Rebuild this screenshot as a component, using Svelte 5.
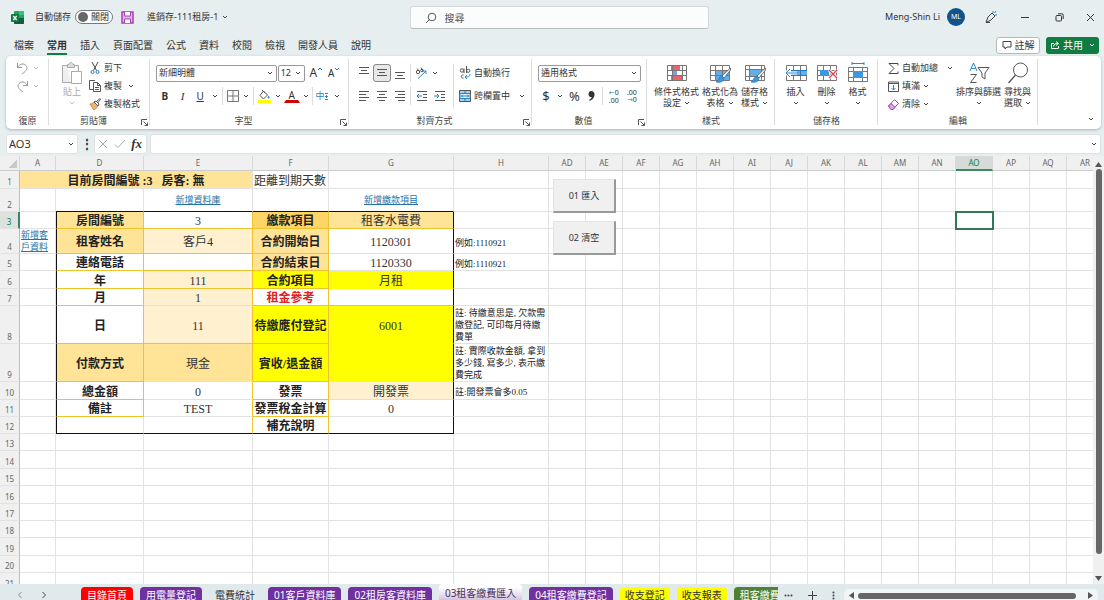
<script>
	let autoSave = false;
	let search = '';
	let cellName = 'AO3';
	let formula = '';

	const menus = ['檔案', '常用', '插入', '頁面配置', '公式', '資料', '校閱', '檢視', '開發人員', '說明'];

	const cols = [
		['A', 36],
		['D', 88],
		['E', 109],
		['F', 76],
		['G', 125],
		['H', 95],
		...['AD', 'AE', 'AF', 'AG', 'AH', 'AI', 'AJ', 'AK', 'AL', 'AM', 'AN', 'AO', 'AP', 'AQ', 'AR'].map((c) => [c, 37])
	];
	const tableWidth = cols.reduce((sum, c) => sum + c[1], 20);

	const rowHeights = [18, 23, 17, 25, 17, 18, 17, 38, 38, 18, 17, 17, 17, 18, 17, 18, 17, 17, 18, 17, 18];

	// text + classes per cell, everything else stays an empty grid cell
	const cells = {
		A1: { t: '目前房間編號 :3   房客: 無', c: 'bold sand', span: 3 },
		F1: { t: '距離到期天數', c: 'left' },
		D2: { c: 'edge-b' },
		E2: { t: '新增資料庫', c: 'link edge-b' },
		F2: { c: 'edge-b' },
		G2: { t: '新增繳款項目', c: 'link edge-b' },
		D3: { t: '房間編號', c: 'bold sand gb gr edge-l' },
		E3: { t: '3', c: 'gb gr' },
		F3: { t: '繳款項目', c: 'bold amber gb gr' },
		G3: { t: '租客水電費', c: 'sand gb edge-r' },
		A4: { t: '新增客\n戶資料', c: 'link left' },
		D4: { t: '租客姓名', c: 'bold sand gb gr edge-l' },
		E4: { t: '客戶4', c: 'cream gb gr' },
		F4: { t: '合約開始日', c: 'bold sand gb gr' },
		G4: { t: '1120301', c: 'edge-r' },
		H4: { t: '例如:1110921', c: 'note' },
		D5: { t: '連絡電話', c: 'bold gb gr edge-l' },
		E5: { c: 'gb gr' },
		F5: { t: '合約結束日', c: 'bold sand gb gr' },
		G5: { t: '1120330', c: 'edge-r' },
		H5: { t: '例如:1110921', c: 'note' },
		D6: { t: '年', c: 'bold gb gr edge-l' },
		E6: { t: '111', c: 'cream gb gr' },
		F6: { t: '合約項目', c: 'bold yellow gb gr' },
		G6: { t: '月租', c: 'yellow edge-r' },
		D7: { t: '月', c: 'bold gb gr edge-l' },
		E7: { t: '1', c: 'cream gr' },
		F7: { t: '租金參考', c: 'bold red gb gr' },
		G7: { c: 'gb edge-r' },
		D8: { t: '日', c: 'bold gb gr edge-l' },
		E8: { t: '11', c: 'cream gb gr' },
		F8: { t: '待繳應付登記', c: 'bold yellow gb gr' },
		G8: { t: '6001', c: 'yellow edge-r' },
		H8: { t: '註: 待繳意思是, 欠款需\n繳登記, 可印每月待繳\n費單', c: 'note long' },
		D9: { t: '付款方式', c: 'bold sand gb gr edge-l' },
		E9: { t: '現金', c: 'sand gr' },
		F9: { t: '實收/退金額', c: 'bold yellow gb gr' },
		G9: { c: 'yellow edge-r' },
		H9: { t: '註: 實際收款金額, 拿到\n多少錢, 寫多少, 表示繳\n費完成', c: 'note long' },
		D10: { t: '總金額', c: 'bold gb gr edge-l' },
		E10: { t: '0', c: 'gr' },
		F10: { t: '發票', c: 'bold gb gr' },
		G10: { t: '開發票', c: 'cream edge-r' },
		H10: { t: '註:開發票會多0.05', c: 'note' },
		D11: { t: '備註', c: 'bold gb gr edge-l' },
		E11: { t: 'TEST', c: 'gr' },
		F11: { t: '發票稅金計算', c: 'bold gb gr' },
		G11: { t: '0', c: 'edge-r' },
		D12: { c: 'edge-l edge-b' },
		E12: { c: 'gr edge-b' },
		F12: { t: '補充說明', c: 'bold gr edge-b' },
		G12: { c: 'edge-r edge-b' },
		AO3: { c: 'selected' }
	};

	const rows = rowHeights.map((h, i) => {
		const n = i + 1;
		const list = [];
		for (let c = 0; c < cols.length; c++) {
			const cell = cells[cols[c][0] + n] ?? {};
			list.push({ id: cols[c][0] + n, ...cell });
			if (cell.span) c += cell.span - 1;
		}
		return { n, h, list };
	});

	const sheets = [
		['目錄首頁', 'red'],
		['用電量登記', 'purple'],
		['電費統計', ''],
		['01客戶資料庫', 'purple'],
		['02租房客資料庫', 'purple'],
		['03租客繳費匯入', 'current'],
		['04租客繳費登記', 'purple'],
		['收支登記', 'yellow'],
		['收支報表', 'yellow'],
		['租客繳費', 'green']
	];
</script>

{#snippet chev()}
	<svg class="chev" viewBox="0 0 6 4" width="6" height="4"><path d="M1 1 3 3 5 1" /></svg>
{/snippet}

{#snippet launcher()}
	<button class="launcher" aria-label="更多選項">
		<svg width="7" height="7" viewBox="0 0 7 7"><path d="M.5 6V.5H6M2.5 2.5l4 4M6.500 3.500v3h-3" /></svg>
	</button>
{/snippet}

{#snippet lines(a, b)}
	<svg width="12" height="12" viewBox="0 0 12 12">
		{#each a as l}
			<path d="M{l[0]} {l[2]}.5H{l[1]}" stroke="#555" />
		{/each}
		{#if b}
			<path d={b} stroke="#2b88c8" fill="none" />
		{/if}
	</svg>
{/snippet}

{#snippet sheetIcon(kind)}
	<svg width="22" height="22" viewBox="0 0 22 22" fill="none">
		{#if kind === 'cond'}
			<path d="M1 3h20v16H1z" fill="#fff" />
			<path d="M5 3h9v5H5zM5 13h11v6H5z" fill="#f0606b" />
			<path d="M6 8h5v5H6z" fill="#7d9ee0" />
			<path d="M1.500 3.500h19v15h-19zM1.500 8.500h19M1.500 13.500h19M6.500 3v16M16.500 3v16" stroke="#777" />
		{:else if kind === 'table' || kind === 'style'}
			<path d={kind === 'table' ? 'M7 8h13v11H7z' : 'M5 7h12v8H5z'} fill="#62aee8" />
			{#if kind === 'table'}
				<path d="M1.500 3.500h19v15h-19zM1.500 8.500h19M1.500 13.500h19M6.500 3v16M13.500 3v16" stroke="#777" />
			{:else}
				<path d="M1.500 3.500h19v15h-19zM1.500 7.500h19M1.500 14.500h19M5.500 3v16M17.500 3v16" stroke="#777" />
			{/if}
			<path d="M21.500 6 13 14l2 2 6.500-8z" fill="#fff" stroke="#555" stroke-width=".8" />
			<path d="M13 14c-3 0-3 4-6 6 4 1 8 0 8-4z" fill="#3d97dc" stroke="#1f6fb0" stroke-width=".6" />
		{:else if kind === 'insert'}
			<path d="M1.500 3.500h20v15h-20zM8.500 3v16M15.500 3v16" stroke="#777" />
			<path d="M6 8h16v6H6z" fill="#62aee8" />
			<path d="M15.500 8v6M22 8.500H6M22 13.500H6" stroke="#2b78b8" />
			<path d="M12 11H1M5 7l-4 4 4 4" stroke="#fff" stroke-width="3" />
			<path d="M13 11H1M5 7l-4 4 4 4" stroke="#2b88c8" />
		{:else if kind === 'delete'}
			<path d="M1.500 3.500h19v15h-19zM1.500 8.500h19M1.500 13.500h19M7.500 3v16M14.500 3v16" stroke="#777" />
			<path d="M4 8h9v6H4z" fill="#3d97dc" />
			<path d="m13 8 8 8M21 8l-8 8" stroke="#fff" stroke-width="3" />
			<path d="m13 8 8 8M21 8l-8 8" stroke="#e04040" stroke-width="1.200" />
		{:else if kind === 'format'}
			<path d="M5 1.500h12M5 0v3M17 0v3" stroke="#2b88c8" />
			<path d="M1.500 5.500h19v14h-19zM1.500 9.500h19M1.500 15.500h19M6.500 5v15M15.500 5v15" stroke="#777" />
			<path d="M6 9h10v7H6z" fill="#3d97dc" />
		{/if}
	</svg>
{/snippet}

{#snippet big(kind, a, b)}
	<button class="big">
		{@render sheetIcon(kind)}
		<span>{a}</span>
		<span>{b}{@render chev()}</span>
	</button>
{/snippet}

<div class="app">
	<header class="title-bar">
		<svg width="13" height="13" viewBox="0 0 13 13">
			<rect x="3" width="10" height="13" rx="1" fill="#21a366" />
			<path d="M8 0h4a1 1 0 0 1 1 1v3H8z" fill="#33c481" />
			<path d="M3 7h10v5a1 1 0 0 1-1 1H4a1 1 0 0 1-1-1z" fill="#185c37" />
			<rect y="3" width="8" height="8" rx="1" fill="#107c41" />
			<path d="m2.300 5 3.400 4M5.700 5 2.300 9" stroke="#fff" stroke-width="1.200" />
		</svg>
		<label class="autosave">
			自動儲存
			<input type="checkbox" role="switch" bind:checked={autoSave} />
			<span class="switch"><i></i>關閉</span>
		</label>
		<button class="save" aria-label="儲存">
			<svg width="13" height="13" viewBox="0 0 13 13" fill="none" stroke="#a73fb5">
				<path d="M1 1h11v11H1z" fill="#e5b5ea" stroke-width="1.500" />
				<path d="M3.500 1v4h6V1M3.500 12V8h6v4" fill="#fff" />
			</svg>
		</button>
		<button class="file">進銷存-111租房-1 {@render chev()}</button>
		<label class="search">
			<svg width="12" height="12" viewBox="0 0 12 12" fill="none" stroke="#555"><circle cx="7" cy="5" r="3.800" /><path d="M4.300 7.700 1 11" /></svg>
			<input type="search" placeholder="搜尋" aria-label="搜尋" bind:value={search} />
		</label>
		<div class="account">
			<span>Meng-Shin Li</span>
			<span class="avatar">ML</span>
		</div>
		<div class="window">
			<button aria-label="繪圖">
				<svg width="14" height="14" viewBox="0 0 14 14" fill="none" stroke="#444"><path d="M2 12.500 4 7l4-4 3 3-4 4zM2 12.500h4" /><path d="M9 1v2M13 5h-2M12 1l-1.500 2" stroke="#2b88c8" /></svg>
			</button>
			<button aria-label="最小化"><svg width="8" height="8" viewBox="0 0 8 8"><path d="M0 4.500h8" stroke="#333" /></svg></button>
			<button aria-label="還原">
				<svg width="9" height="9" viewBox="0 0 9 9" fill="none" stroke="#333"><rect x="1" y="2.500" width="5.500" height="5.500" rx="1" /><path d="M3 .8h3.500A1.500 1.500 0 0 1 8.200 2.500V6" /></svg>
			</button>
			<button aria-label="關閉"><svg width="9" height="9" viewBox="0 0 9 9"><path d="m1 1 7 7M8 1 1 8" stroke="#333" /></svg></button>
		</div>
	</header>

	<nav class="menus">
		{#each menus as m}
			<a href="#{m}" class:active={m === '常用'}>{m}</a>
		{/each}
		<span class="grow"></span>
		<button class="comment">
			<svg width="10" height="10" viewBox="0 0 10 10" fill="none" stroke="#444"><path d="M1 1.500h8v5.500H5L3 9V7H1z" /></svg>
			註解
		</button>
		<button class="share">
			<svg width="10" height="10" viewBox="0 0 10 10" fill="none" stroke="#fff"><path d="M4 3.500H1.500v5h7V6M3.500 6.500C4 4 5.500 3.500 8 3.500M6 1.500l2.500 2L6 5.500" /></svg>
			共用
			{@render chev()}
		</button>
	</nav>

	<section class="ribbon">
		<div class="group undo">
			<div class="body">
				<div class="stack faded">
					<button class="row" aria-label="復原"><svg width="13" height="13" viewBox="0 0 13 13" fill="none" stroke="#999"><path d="M1.500 1v4.500H6M1.500 5.500C4 1.500 8 1 10 3.500s1 5-4 8.500" /></svg>{@render chev()}</button>
					<button class="row" aria-label="取消復原"><svg width="13" height="13" viewBox="0 0 13 13" fill="none" stroke="#999"><path d="M11.500 1v4.500H7M11.500 5.500C9 1.500 5 1 3 3.500s-1 5 4 8.500" /></svg>{@render chev()}</button>
				</div>
			</div>
			<div class="name">復原</div>
		</div>

		<div class="group clip">
			<div class="body">
				<button class="big faded">
					<svg width="22" height="22" viewBox="0 0 22 22" fill="none" stroke="#aaa"><path d="M10 20.500H1.500v-17H6M14 3.500h3.500V9" fill="#eee" /><path d="M6.500 2.500H8C8 0 12 0 12 2.500h1.500v3h-7z" fill="#ddd" /><path d="M10.500 9.500h10v12h-10z" fill="#fff" /></svg>
					<span>貼上</span>
					<span>{@render chev()}</span>
				</button>
				<div class="stack">
					<button class="row">
						<svg width="12" height="12" viewBox="0 0 12 12" fill="none"><path d="M3 0l4.500 8.500M9 0 4.500 8.500" stroke="#444" /><circle cx="3.500" cy="10" r="1.500" stroke="#2b88c8" /><circle cx="8.500" cy="10" r="1.500" stroke="#2b88c8" /></svg>
						剪下
					</button>
					<button class="row">
						<svg width="12" height="12" viewBox="0 0 12 12" fill="none" stroke="#555"><path d="M4 9.500H.5v-9H6" /><path d="M4.500 2.500h4l3 3v6h-7zM8.500 2.500v3h3M6 7.500h4M6 9.500h4" /></svg>
						複製 <span class="pad">{@render chev()}</span>
					</button>
					<button class="row">
						<svg width="12" height="12" viewBox="0 0 12 12" fill="none"><path d="M1 6c2 0 3-1 4-2l4 4c-1 1-2 3-4 4z" fill="#f7b267" stroke="#d9822b" /><path d="m5 4 2-1 3 3-1 2zM7.500 3.500 11 .5l.5 1-3 3.500" stroke="#555" fill="#fff" /></svg>
						複製格式
					</button>
				</div>
			</div>
			<div class="name">剪貼簿</div>
			{@render launcher()}
		</div>

		<div class="group font">
			<div class="body tools">
				<div class="line">
					<span class="combo wide"><select aria-label="字型"><option>新細明體</option></select>{@render chev()}</span>
					<span class="combo size"><select aria-label="字型大小"><option>12</option></select>{@render chev()}</span>
					<button class="tool latin resize large">A<svg width="6" height="4" viewBox="0 0 6 4"><path d="M1 3 3 1l2 2" /></svg></button>
					<button class="tool latin resize">A<svg width="6" height="4" viewBox="0 0 6 4"><path d="m1 1 2 2 2-2" /></svg></button>
				</div>
				<div class="line">
					<button class="tool latin"><b>B</b></button>
					<button class="tool latin"><i class="it">I</i></button>
					<button class="tool latin"><u>U</u></button>
					<button class="drop" aria-label="底線選項">{@render chev()}</button>
					<span class="sep"></span>
					<button class="tool sm" aria-label="框線"><svg width="12" height="12" viewBox="0 0 12 12" fill="none" stroke="#777"><path d="M.5.5h11v11H.5zM6 .5v11M.5 6h11" /></svg></button>
					<button class="drop" aria-label="框線選項">{@render chev()}</button>
					<span class="sep"></span>
					<button class="tool sm" aria-label="填滿色彩"><svg width="13" height="13" viewBox="0 0 13 13" fill="none"><path d="M5.500 1 9.500 5l-4 4L2 5.500zM4 0l3 3" stroke="#555" /><path d="M10.500 5.500c1.500 2 1.500 3 0 3s-1-1 0-3z" fill="#2b88c8" /><path d="M0 10h13v3H0z" fill="#ff0" /></svg></button>
					<button class="drop" aria-label="填滿選項">{@render chev()}</button>
					<button class="tool sm latin color-a">A</button>
					<button class="drop" aria-label="字型色彩選項">{@render chev()}</button>
					<span class="sep"></span>
					<button class="tool sm phon">中<svg width="3" height="9" viewBox="0 0 3 9"><path d="M0 1.500h3M0 4.500h3M1.500 3v3M0 7.500h3" stroke="#2b88c8" /></svg></button>
					<button class="drop" aria-label="注音選項">{@render chev()}</button>
				</div>
			</div>
			<div class="name">字型</div>
			{@render launcher()}
		</div>

		<div class="group align">
			<div class="body">
				<div class="tools">
					<div class="line">
						<button class="tool" aria-label="靠上對齊">{@render lines([[1, 11, 0], [3, 9, 3], [1, 11, 6]])}</button>
						<button class="tool on" aria-label="置中對齊">{@render lines([[1, 11, 2], [3, 9, 5], [1, 11, 8]])}</button>
						<button class="tool" aria-label="靠下對齊">{@render lines([[1, 11, 5], [3, 9, 8], [1, 11, 11]])}</button>
						<span class="sep"></span>
						<button class="tool sm" aria-label="方向"><svg width="12" height="12" viewBox="0 0 12 12" fill="none"><circle cx="3" cy="5" r="1.700" stroke="#555" /><path d="M2 1.500 5 5M6 .500 8 4" stroke="#555" /><circle cx="7" cy="3.500" r="1.300" stroke="#555" /><path d="M3 11.500 11 4M8 4h3v3" stroke="#2b88c8" /></svg></button>
						<button class="drop" aria-label="方向選項">{@render chev()}</button>
					</div>
					<div class="line">
						<button class="tool" aria-label="靠左">{@render lines([[1, 11, 1], [1, 8, 4], [1, 11, 7], [1, 8, 10]])}</button>
						<button class="tool" aria-label="置中">{@render lines([[1, 11, 1], [3, 9, 4], [1, 11, 7], [3, 9, 10]])}</button>
						<button class="tool" aria-label="靠右">{@render lines([[1, 11, 1], [4, 11, 4], [1, 11, 7], [4, 11, 10]])}</button>
						<span class="sep"></span>
						<button class="tool" aria-label="減少縮排">{@render lines([[1, 11, 1], [7, 11, 4], [7, 11, 7], [1, 11, 10]], 'M6 6H1M3 4 1 6l2 2')}</button>
						<button class="tool" aria-label="增加縮排">{@render lines([[1, 11, 1], [7, 11, 4], [7, 11, 7], [1, 11, 10]], 'M0 6h5M3 4l2 2-2 2')}</button>
					</div>
				</div>
				<span class="sep tall"></span>
				<div class="tools">
					<button class="line text">
						<svg width="12" height="14" viewBox="0 0 12 14" fill="none" stroke="#555"><circle cx="3" cy="4.500" r="1.700" /><path d="M5 2.500V7M7.500 0v7" /><circle cx="9.300" cy="4.800" r="1.600" /><path d="M4.500 9C1.500 8.500 1.500 12.500 4.500 12" /><path d="M11 8c0 3-2 3-5 3M8 9l-2 2 2 2" stroke="#2b88c8" /></svg>
						自動換行
					</button>
					<button class="line text">
						<svg width="12" height="12" viewBox="0 0 12 12" fill="none"><path d="M.5.5h11v11H.5z" fill="#9fd0f0" stroke="#555" /><path d="M1 3.500h10v5H1z" fill="#fff" stroke="#2b88c8" /><path d="M2 6h8M4 4.500 2.500 6 4 7.500M8 4.500 9.500 6 8 7.500M6 .5v3M6 8.500v3" stroke="#2b78b8" /></svg>
						跨欄置中 <span class="pad">{@render chev()}</span>
					</button>
				</div>
			</div>
			<div class="name">對齊方式</div>
			{@render launcher()}
		</div>

		<div class="group number">
			<div class="body tools">
				<div class="line"><span class="combo full"><select aria-label="數值格式"><option>通用格式</option></select>{@render chev()}</span></div>
				<div class="line spread">
					<button class="tool sm sign">$</button>
					<button class="drop" aria-label="會計格式">{@render chev()}</button>
					<button class="tool sm sign">%</button>
					<button class="tool" aria-label="千分位樣式"><svg width="7" height="10" viewBox="0 0 7 10"><path d="M3 0c2.500 0 3.500 1.500 3.500 3.500C6.500 7 4 9 1.500 9.800L1 9c1.500-.8 2.500-1.800 2.700-3C2 6.500.5 5 .5 3.200S1.500 0 3 0z" fill="#333" /></svg></button>
					<span class="sep"></span>
					<button class="tool dec"><span><em>←</em>0</span><span>.00</span></button>
					<button class="tool dec"><span>.00</span><span><em>→</em>0</span></button>
				</div>
			</div>
			<div class="name">數值</div>
			{@render launcher()}
		</div>

		<div class="group styles">
			<div class="body">
				{@render big('cond', '條件式格式', '設定')}
				{@render big('table', '格式化為', '表格')}
				{@render big('style', '儲存格', '樣式')}
			</div>
			<div class="name">樣式</div>
		</div>

		<div class="group cellops">
			<div class="body">
				{@render big('insert', '插入', '')}
				{@render big('delete', '刪除', '')}
				{@render big('format', '格式', '')}
			</div>
			<div class="name">儲存格</div>
		</div>

		<div class="group edit">
			<div class="body">
				<div class="stack">
					<button class="row"><svg width="11" height="11" viewBox="0 0 11 11" fill="none" stroke="#444"><path d="M10 2.500V.5H1L6 5.500l-5 5h9v-2" /></svg>自動加總 <span class="pad">{@render chev()}</span></button>
					<button class="row"><svg width="11" height="11" viewBox="0 0 11 11" fill="none" stroke="#555"><path d="M.5 1h10v9.500H.5zM.5 2.500h10" /><path d="M5.500 4v5M3.500 7l2 2 2-2" stroke="#2b88c8" /></svg>填滿{@render chev()}</button>
					<button class="row"><svg width="11" height="11" viewBox="0 0 11 11" fill="none" stroke="#a040b0"><path d="M.5 7 6.500.7l4 3.500L5 10.500H3z" fill="#fff" /><path d="M.5 7 3 4.500l4 3.800-2 2.200H3z" fill="#dda6e4" /></svg>清除{@render chev()}</button>
				</div>
				<button class="big">
					<svg width="22" height="22" viewBox="0 0 22 22" fill="none"><path d="m2 9 3.500-8L9 9M3.300 6.500h4.400" stroke="#2b88c8" /><path d="M2.500 12.500h6l-6 8h6" stroke="#555" /><path d="M10 5.500h11l-4 5.500v6l-3-2v-4z" stroke="#555" /></svg>
					<span>排序與篩選</span>
					<span>{@render chev()}</span>
				</button>
				<button class="big">
					<svg width="22" height="22" viewBox="0 0 22 22" fill="none" stroke="#555"><circle cx="13.500" cy="8" r="7" /><path d="m8.500 13-7 8" stroke-width="1.300" /></svg>
					<span>尋找與</span>
					<span>選取{@render chev()}</span>
				</button>
			</div>
			<div class="name">編輯</div>
		</div>
		<button class="collapse" aria-label="摺疊功能區">{@render chev()}</button>
	</section>

	<div class="formula-bar">
		<div class="box name-box">
			<input aria-label="名稱方塊" bind:value={cellName} />
			{@render chev()}
		</div>
		<span class="dots">⋮</span>
		<div class="box fx">
			<button aria-label="取消"><svg width="10" height="10" viewBox="0 0 10 10"><path d="m1 1 8 8M9 1 1 9" stroke="#aaa" /></svg></button>
			<button aria-label="輸入"><svg width="12" height="10" viewBox="0 0 12 10" fill="none"><path d="m1 5.500 3 3L11 1" stroke="#aaa" /></svg></button>
			<button class="fn">fx</button>
		</div>
		<div class="box formula">
			<input aria-label="資料編輯列" bind:value={formula} />
			{@render chev()}
		</div>
	</div>

	<main class="sheet">
		<div class="viewport">
			<table style:width="{tableWidth}px">
				<colgroup>
					<col style:width="20px" />
					{#each cols as [name, w] (name)}
						<col style:width="{w}px" />
					{/each}
				</colgroup>
				<thead>
					<tr>
						<th class="corner" aria-label="全選"><i></i></th>
						{#each cols as [name] (name)}
							<th class:picked={name === 'AO'}>{name}</th>
						{/each}
					</tr>
				</thead>
				<tbody>
					{#each rows as row (row.n)}
						<tr style:height="{row.h}px">
							<th class:picked={row.n === 3}>{row.n}</th>
							{#each row.list as cell (cell.id)}
								<td class={cell.c} colspan={cell.span}>
									{#if cell.c?.includes('link')}
										<a href="#{cell.id}">{cell.t}</a>
									{:else}{cell.t ?? ''}{/if}
								</td>
							{/each}
						</tr>
					{/each}
				</tbody>
			</table>
			<button class="macro import">01 匯入</button>
			<button class="macro clear">02 清空</button>
		</div>
		<div class="vscroll">
			<svg width="7" height="5" viewBox="0 0 7 5"><path d="M3.500 0 7 5H0z" fill="#555" /></svg>
			<div class="track"><div class="thumb"></div></div>
			<svg width="7" height="5" viewBox="0 0 7 5"><path d="M3.500 5 7 0H0z" fill="#555" /></svg>
		</div>
	</main>

	<footer class="tabs">
		<div class="nav">
			<button aria-label="上一張"><svg width="6" height="8" viewBox="0 0 6 8" fill="none"><path d="M4.500 1 1.500 4l3 3" stroke="#888" /></svg></button>
			<button aria-label="下一張"><svg width="6" height="8" viewBox="0 0 6 8" fill="none"><path d="m1.500 1 3 3-3 3" stroke="#444" /></svg></button>
		</div>
		<div class="list">
			{#each sheets as [name, tone]}
				<button class="tab {tone}">{name}</button>
			{/each}
		</div>
		<div class="extra">
			<button aria-label="更多工作表"><svg width="9" height="3" viewBox="0 0 9 3" fill="#444"><circle cx="1.500" cy="1.500" r="1" /><circle cx="4.500" cy="1.500" r="1" /><circle cx="7.500" cy="1.500" r="1" /></svg></button>
			<button aria-label="新增工作表"><svg width="9" height="9" viewBox="0 0 9 9"><path d="M4.500 0v9M0 4.500h9" stroke="#444" /></svg></button>
			<svg width="3" height="9" viewBox="0 0 3 9" fill="#444"><circle cx="1.500" cy="1.500" r="1" /><circle cx="1.500" cy="4.500" r="1" /><circle cx="1.500" cy="7.500" r="1" /></svg>
		</div>
		<div class="hscroll">
			<svg width="5" height="7" viewBox="0 0 5 7"><path d="M0 3.500 5 0v7z" fill="#555" /></svg>
			<div class="thumb"></div>
			<svg width="5" height="7" viewBox="0 0 5 7"><path d="M5 3.500 0 0v7z" fill="#555" /></svg>
		</div>
	</footer>
</div>

<style>
	:global(body) {
		overflow: hidden;
	}

	.app {
		display: flex;
		flex-direction: column;
		height: 100vh;
		background: #e6eef0;
		color: #333;
		font-family: 'Noto Sans', 'Noto Sans CJK TC', sans-serif;
		font-size: 9px;
		line-height: 12px;
	}

	.app * {
		box-sizing: border-box;
	}

	button,
	input,
	select {
		font: inherit;
		color: inherit;
		background: none;
		border: none;
		padding: 0;
		margin: 0;
		outline: none;
		white-space: nowrap;
	}

	svg {
		flex: none;
		display: block;
	}

	.chev path {
		fill: none;
		stroke: #444;
	}

	/* title bar */
	.title-bar {
		position: relative;
		display: flex;
		align-items: center;
		height: 34px;
		padding-left: 11px;
	}

	.autosave {
		display: flex;
		align-items: center;
		gap: 4px;
		margin-left: 11px;
	}

	.autosave input {
		position: absolute;
		opacity: 0;
	}

	.switch {
		display: flex;
		align-items: center;
		gap: 3px;
		width: 38px;
		height: 14px;
		padding-left: 2px;
		border: 1px solid #777;
		border-radius: 7px;
		background: #fff;
	}

	.switch i {
		width: 10px;
		height: 10px;
		border-radius: 50%;
		background: #666;
	}

	.save {
		margin-left: 8px;
	}

	.file {
		display: flex;
		align-items: center;
		gap: 4px;
		margin-left: 13px;
	}

	.search {
		position: absolute;
		left: 37.1%;
		width: 27.1%;
		top: 6px;
		display: flex;
		align-items: center;
		gap: 8px;
		height: 23px;
		padding-left: 14px;
		background: #fbfcfc;
		border: 1px solid #d4dadc;
		border-bottom-color: #b8c0c2;
		border-radius: 3px;
		font-size: 10px;
	}

	.search input {
		flex: 1;
		min-width: 0;
	}

	.search input::placeholder {
		color: #555;
	}

	.account {
		display: flex;
		align-items: center;
		gap: 7px;
		margin-left: auto;
	}

	.avatar {
		width: 18px;
		height: 18px;
		border-radius: 50%;
		background: #0f548c;
		color: #fff;
		font-size: 7px;
		line-height: 18px;
		text-align: center;
	}

	.window {
		display: flex;
		margin-left: 9px;
	}

	.window button {
		display: grid;
		place-items: center;
		width: 34px;
		height: 34px;
	}

	.window button:last-child {
		width: 28px;
	}

	/* menu row */
	.menus {
		display: flex;
		align-items: center;
		height: 22px;
		padding: 0 5px 0 14px;
		gap: 13px;
		font-size: 10px;
	}

	.menus a {
		height: 20px;
		line-height: 20px;
		color: #333;
		text-decoration: none;
		border-bottom: 2px solid transparent;
	}

	.menus a.active {
		font-weight: bold;
		border-color: #107c41;
	}

	.grow {
		flex: 1;
	}

	.comment,
	.share {
		display: flex;
		align-items: center;
		justify-content: center;
		gap: 3px;
		height: 17px;
		border-radius: 3px;
	}

	.comment {
		width: 44px;
		border: 1px solid #b8b8b8;
		background: #fff;
	}

	.share {
		width: 53px;
		margin-left: -7px;
		background: #107c41;
		color: #fff;
	}

	.share .chev {
		margin-left: 3px;
	}

	.share .chev path {
		stroke: #fff;
	}

	/* ribbon */
	.ribbon {
		display: flex;
		height: 73px;
		margin: 0 3px 0 6px;
		background: #fff;
		border-radius: 5px;
		box-shadow: 0 1px 3px #a9b4b8;
	}

	.group {
		position: relative;
		display: flex;
		flex-direction: column;
		justify-content: space-between;
		padding: 3px 6px 2px;
	}

	.group::after {
		content: '';
		position: absolute;
		right: 0;
		top: 3px;
		bottom: 4px;
		width: 1px;
		background: #ddd;
	}

	.undo { width: 43px; }
	.clip { width: 101px; }
	.font { width: 199px; }
	.align { width: 183px; }
	.number { width: 115px; }
	.styles { width: 128px; }
	.cellops { width: 103px; }
	.edit { width: 160px; }

	.body {
		display: flex;
		gap: 3px;
	}

	.name {
		text-align: center;
		line-height: 13px;
		color: #444;
	}

	.clip .name,
	.font .name,
	.align .name,
	.number .name {
		padding-right: 12px;
	}

	.launcher {
		position: absolute;
		right: 2px;
		bottom: 3px;
	}

	.launcher path {
		fill: none;
		stroke: #555;
	}

	.stack {
		display: flex;
		flex-direction: column;
	}

	.row {
		display: flex;
		align-items: center;
		gap: 4px;
		height: 18px;
	}

	.undo .body {
		padding-left: 4px;
	}

	.pad {
		padding-left: 6px;
	}

	.clip .pad {
		padding-left: 3px;
	}

	.faded {
		color: #aaa;
	}

	.faded .chev path {
		stroke: #bbb;
	}

	.big {
		display: flex;
		flex-direction: column;
		align-items: center;
		padding-top: 3px;
		line-height: 11px;
	}

	.big span {
		display: flex;
		align-items: center;
		gap: 3px;
		min-height: 11px;
	}

	.big svg + span {
		margin-top: 2px;
	}

	.clip .body {
		padding-left: 6px;
		gap: 6px;
	}

	.clip .row {
		gap: 3px;
	}

	.styles .body {
		padding-left: 1px;
	}

	.cellops .body {
		justify-content: center;
		gap: 9px;
	}

	.cellops .big {
		width: 22px;
	}

	.edit .body {
		padding-left: 4px;
		gap: 3px;
	}

	.edit .row {
		gap: 3px;
	}

	.tools {
		display: flex;
		flex-direction: column;
		gap: 5px;
		padding-top: 5px;
	}

	.align .body {
		padding: 0;
	}

	.line {
		display: flex;
		align-items: center;
		height: 18px;
	}

	.line.text {
		gap: 3px;
	}

	.combo {
		display: flex;
		align-items: center;
		height: 17px;
		padding-right: 3px;
		border: 1px solid #999;
		border-radius: 2px;
		background: #fff;
	}

	.combo select {
		flex: 1;
		min-width: 0;
		padding-left: 2px;
		appearance: none;
	}

	.combo.wide {
		width: 122px;
	}

	.combo.size {
		width: 28px;
		margin-left: 1px;
	}

	.combo.full {
		width: 104px;
	}

	.tool {
		display: grid;
		place-items: center;
		width: 18px;
		height: 18px;
	}

	.tool.sm {
		width: 16px;
	}

	.tool.on {
		border: 1px solid #888;
		border-radius: 3px;
		background: #e8e8e8;
	}

	.latin {
		font-size: 10px;
	}

	.it {
		font-family: 'Liberation Serif', serif;
		font-size: 11px;
	}

	.resize {
		display: flex;
		align-items: flex-start;
		justify-content: center;
		line-height: 18px;
	}

	.resize.large {
		font-size: 12px;
		margin-left: 2px;
	}

	.resize svg {
		margin-top: 3px;
	}

	.resize path {
		fill: none;
		stroke: #2b78b8;
	}

	.color-a {
		height: 14px;
		line-height: 10px;
		border-bottom: 3px solid #d00000;
		border-left: 2px solid transparent;
		border-right: 2px solid transparent;
	}

	.phon {
		display: flex;
		align-items: center;
		gap: 1px;
		color: #2b88c8;
	}

	.drop {
		display: grid;
		place-items: center;
		width: 12px;
		height: 18px;
	}

	.sep {
		width: 1px;
		height: 18px;
		margin: 0 2px 0 1px;
		background: #ddd;
	}

	.sep.tall {
		height: 44px;
		margin-top: 5px;
	}

	.sign {
		font-size: 13px;
	}

	.spread {
		justify-content: space-between;
	}

	.dec {
		font-size: 7px;
		line-height: 7px;
		align-content: center;
	}

	.dec em {
		font-style: normal;
		font-family: 'DejaVu Sans', sans-serif;
		color: #2b88c8;
	}

	.collapse {
		align-self: flex-end;
		margin-left: auto;
		padding: 8px 7px;
	}

	/* formula bar */
	.formula-bar {
		display: flex;
		align-items: center;
		gap: 3px;
		height: 27px;
		padding: 4px 3px 2px 6px;
	}

	.box {
		display: flex;
		align-items: center;
		height: 20px;
		background: #fff;
		border: 1px solid #dde3e5;
		border-radius: 3px;
	}

	.name-box {
		width: 72px;
		padding: 0 3px 0 2px;
		font-size: 11px;
	}

	.box input {
		flex: 1;
		min-width: 0;
	}

	.dots {
		width: 10px;
		text-align: center;
		font-size: 12px;
		font-weight: bold;
	}

	.fx {
		width: 53px;
		justify-content: space-between;
		padding: 0 4px 0 3px;
	}

	.fn {
		font: italic bold 13px/16px 'Liberation Serif', serif;
	}

	.formula {
		flex: 1;
		padding-right: 3px;
	}

	/* sheet */
	.sheet {
		flex: 1;
		display: flex;
		min-height: 0;
		background: #fff;
	}

	.viewport {
		position: relative;
		flex: 1;
		min-width: 0;
		overflow: hidden;
	}

	table {
		table-layout: fixed;
		border-collapse: separate;
		border-spacing: 0;
	}

	th {
		padding: 0;
		font-size: 8px;
		font-weight: normal;
		line-height: 12px;
		color: #666;
		background: #f0f0f0;
		border-right: 1px solid #d8d8d8;
	}

	thead th {
		height: 15px;
		border-bottom: 1px solid #ccc;
	}

	tbody th {
		vertical-align: bottom;
		border-right-color: #bbb;
		border-bottom: 1px solid #e2e2e2;
	}

	thead .picked {
		color: #107c41;
		background: #d5dcd8;
		border-bottom: 2px solid #3d8661;
	}

	tbody .picked {
		color: #107c41;
		background: #dde2df;
		border-right: 2px solid #3d8661;
	}

	.corner i {
		display: block;
		margin: 2px 2px 0 auto;
		width: 8px;
		height: 8px;
		background: linear-gradient(135deg, transparent 50%, #c8c8c8 50%);
	}

	td {
		padding: 3px 0 0;
		font-family: 'Liberation Serif', 'Noto Sans CJK TC', serif;
		font-size: 12px;
		line-height: 13px;
		text-align: center;
		white-space: pre;
		color: #333;
		border-right: 1px solid #e2e2e2;
		border-bottom: 1px solid #e2e2e2;
	}

	.bold {
		font-weight: bold;
		color: #222;
	}

	.left {
		text-align: left;
		padding-left: 1px;
	}

	.sand { background: #ffe397; }
	.amber { background: #fdd567; }
	.cream { background: #fff0cf; border-color: #f5dfa5; }
	.yellow { background: #ff0; border-color: #ff0; }
	.red { color: #e02020; }
	.gb { border-bottom-color: #eec32e; }
	.gr { border-right-color: #eec32e; }
	.edge-l { border-left: 1px solid #111; }
	.edge-r { border-right: 1px solid #111; }
	.edge-b { border-bottom: 1px solid #111; }

	.link,
	.note {
		font-size: 9px;
		line-height: 12px;
	}

	.link {
		padding-top: 0;
	}

	.link a {
		color: #2473a8;
		text-decoration: underline;
	}

	.note {
		text-align: left;
		padding-left: 1px;
		color: #222;
	}

	.long {
		padding-top: 1px;
	}

	.selected {
		outline: 2px solid #2f7a55;
		outline-offset: -1px;
	}

	.macro {
		position: absolute;
		left: 553px;
		width: 63px;
		height: 34px;
		background: #f0f0f0;
		border: 1px solid #e4e4e4;
		border-right: 2px solid #999;
		border-bottom: 2px solid #999;
	}

	.import { top: 23px; }
	.clear { top: 65px; }

	.vscroll {
		display: flex;
		flex-direction: column;
		align-items: center;
		gap: 2px;
		width: 11px;
		padding: 6px 0 3px;
		background: #f0f0f0;
	}

	.track {
		flex: 1;
	}

	.vscroll .thumb {
		width: 6px;
		height: 95%;
		border-radius: 3px;
		background: #666;
	}

	/* sheet tabs */
	.tabs {
		display: flex;
		align-items: flex-start;
		height: 16px;
		overflow: hidden;
		background: #e0eaec;
	}

	.nav {
		display: flex;
		gap: 18px;
		width: 81px;
		padding: 7px 0 0 17px;
	}

	.list {
		flex: 1;
		display: flex;
		gap: 7px;
		min-width: 0;
		overflow: hidden;
	}

	.tab {
		flex: none;
		height: 16px;
		margin-top: 3px;
		padding: 0 6px;
		font-size: 10px;
		line-height: 14px;
		border-radius: 4px 4px 0 0;
	}

	.tab.red { background: #f00; color: #fff; }
	.tab.purple { background: #7030a0; color: #fff; }
	.tab.yellow { background: #ff0; padding: 0 5px; }
	.tab.green { background: #4f8234; color: #fff; }

	.tab.current {
		height: 18px;
		margin-top: 0;
		color: #4a3358;
		background: linear-gradient(#fff 20%, #cdb9dc);
	}

	.extra {
		display: flex;
		align-items: center;
		gap: 15px;
		height: 22px;
		padding: 0 9px 0 6px;
	}

	.hscroll {
		display: flex;
		align-items: center;
		gap: 4px;
		width: 23%;
		height: 13px;
		margin: 5px 6px 0 0;
		padding: 0 5px;
		border-radius: 5px;
		background: #f2f5f6;
	}

	.hscroll .thumb {
		flex: 1;
		height: 6px;
		margin-right: 8px;
		border-radius: 3px;
		background: #666;
	}
</style>
